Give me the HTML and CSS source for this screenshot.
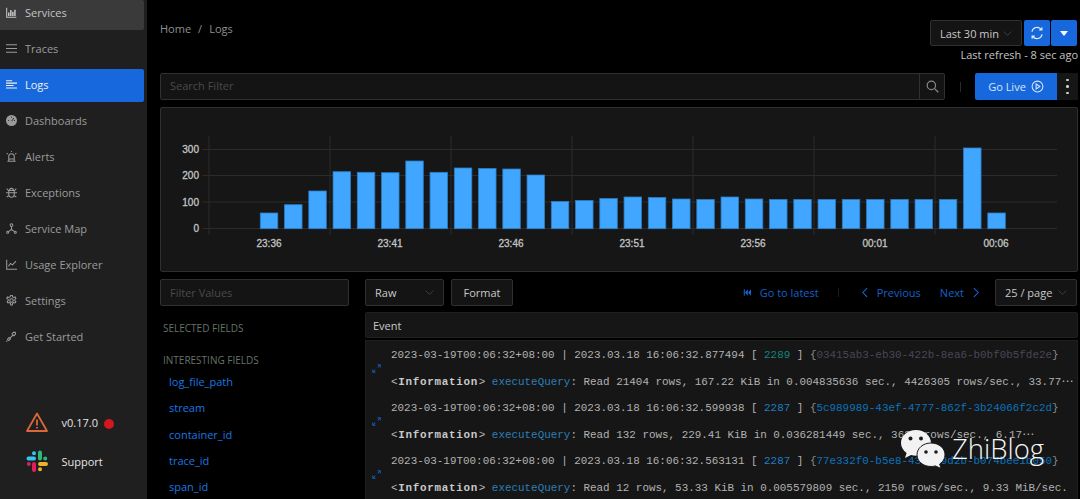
FILE: index.html
```html
<!DOCTYPE html>
<html lang="en">
<head>
<meta charset="utf-8">
<title>Logs</title>
<link rel="stylesheet" href="styles.css">
</head>
<body>
<div class="app">
  <aside class="sidebar">
    <nav class="menu">
      <a class="item first"><svg class="ic" viewBox="0 0 16 16"><path d="M1 1v14h14"/><path class="fat" d="M4 13V8M7 13V4.500M10 13V7M13 13V4"/></svg>Services</a>
      <a class="item"><svg class="ic" viewBox="0 0 16 16"><path d="M0 2.500h16M0 8h16M0 13.500h16"/></svg>Traces</a>
      <a class="item active"><svg class="ic" viewBox="0 0 16 16"><path d="M0 2.500h9M0 6h16M0 9.500h11M0 13h16"/></svg>Logs</a>
      <a class="item"><svg class="ic" viewBox="0 0 16 16"><circle class="solid" cx="8" cy="8" r="8"/><path class="cut" d="M8 9l3.500-4.500M3 8h1.500M8 2.500v1.500M11.500 8H13"/></svg>Dashboards</a>
      <a class="item"><svg class="ic" viewBox="0 0 16 16"><path d="M2 15h12M4 15V8a4 4 0 0 1 8 0v7M1 3l1.500 1.500M15 3l-1.500 1.500M8 0v1.500M4 11.500h8"/></svg>Alerts</a>
      <a class="item"><svg class="ic" viewBox="0 0 16 16"><path d="M5 5a3 3 0 0 1 6 0M4 5h8v6a4 4 0 0 1-8 0zM1 2.500L4 5.500M15 2.500l-3 3M0 8.500h4M12 8.500h4M1 14.500l3-2M15 14.500l-3-2M4 8.500h8"/></svg>Exceptions</a>
      <a class="item"><svg class="ic" viewBox="0 0 16 16"><circle cx="8" cy="3" r="2"/><circle cx="2.500" cy="13.500" r="1.500"/><circle cx="13.500" cy="13.500" r="1.500"/><path d="M8 5v4.500M8 9.500l-4.500 3M8 9.500l4.500 3"/></svg>Service Map</a>
      <a class="item"><svg class="ic" viewBox="0 0 16 16"><path d="M1 1v14h15M3.500 10.500l3-4 3 2 5-5.500"/></svg>Usage Explorer</a>
      <a class="item"><svg class="ic" viewBox="0 0 16 16"><circle cx="8" cy="8" r="2.500"/><path d="M6.800 .6h2.400l.4 2.200 1.600.8 2-.8 1.200 2-1.600 1.600v1.800l1.600 1.400-1.200 2-2-.7-1.600.9-.4 2.600H6.800l-.4-2.600-1.600-.9-2 .7-1.200-2 1.600-1.400V6.400L1 4.800l1.200-2 2 .8 1.600-.8z"/></svg>Settings</a>
      <a class="item"><svg class="ic" viewBox="0 0 16 16"><path d="M6 10l4-4M2 12l2.500-2.500 2 2L4 14zM9 3.500L11 2h2.500L14 4.500 12.500 6l-1 1-2.500-2.500zM.5 15.500l1.500-1.500"/></svg>Get Started</a>
    </nav>
    <div class="side-foot">
      <div class="foot-row">
        <svg class="foot-ic" viewBox="0 0 22 20"><path class="warn" d="M11 1.500L1 19h20zM11 7.500v6M11 15v1.500"/></svg>
        <span class="foot-text">v0.17.0</span><span class="red-dot"></span>
      </div>
      <div class="foot-row">
        <svg class="foot-ic slack" viewBox="0 0 22 22">
          <path class="sl-blue" d="M2.500 8.500h5.500M8 3.200v0"/>
          <path class="sl-green" d="M14 2.500v6M19.200 8.500v0"/>
          <path class="sl-yellow" d="M14 14h6M14 19.200v0"/>
          <path class="sl-red" d="M8 14v6M2.800 14v0"/>
        </svg>
        <span class="foot-text">Support</span>
      </div>
    </div>
  </aside>

  <main class="main">
    <header class="top">
      <div class="crumbs">Home<span class="slash">/</span>Logs</div>
      <div class="time">
        <div class="time-controls">
          <div class="select time-select">Last 30 min<svg class="chev" viewBox="0 0 12 12"><path d="M1 3.500l5 5 5-5"/></svg></div>
          <button class="blue-btn"><svg class="refresh" viewBox="0 0 16 16"><path d="M2.200 6.500A6 6 0 0 1 13 4.200M13.800 9.500A6 6 0 0 1 3 11.800M13.600 1.500v3h-3M2.400 14.500v-3h3"/></svg></button>
          <button class="blue-btn"><span class="caret"></span></button>
        </div>
        <div class="refresh-text">Last refresh - 8 sec ago</div>
      </div>
    </header>

    <div class="search-row">
      <div class="search">
        <span class="search-ph">Search Filter</span>
        <span class="search-btn"><svg class="search-ic" viewBox="0 0 14 14"><circle cx="5.800" cy="5.800" r="4.500"/><path d="M9 9l4.200 4.200"/></svg></span>
      </div>
      <span class="vsep"></span>
      <div class="live">
        <button class="live-btn">Go Live<svg class="play" viewBox="0 0 14 14"><circle cx="7" cy="7" r="5.800"/><path d="M5.500 4.300l4 2.700-4 2.700z"/></svg></button>
        <span class="dots"><i></i><i></i><i></i></span>
      </div>
    </div>

    <section class="chart-panel">
      <svg class="chart" viewBox="0 0 918 165">
        <g class="grid">
          <path d="M42 42.500H897M42 68.500H897M42 95H897M42 121.500H897"/>
          <path d="M49 29v99M170 29v99M291 29v99M412 29v99M533 29v99M654 29v99M775 29v99"/>
        </g>
        <g class="bars">
          <rect x="100.300" y="106" width="17.500" height="15.700"/>
          <rect x="124.550" y="97.700" width="17.500" height="24"/>
          <rect x="148.800" y="84" width="17.500" height="37.700"/>
          <rect x="173.050" y="64.700" width="17.500" height="57"/>
          <rect x="197.300" y="65.300" width="17.500" height="56.400"/>
          <rect x="221.550" y="65.700" width="17.500" height="56"/>
          <rect x="245.800" y="54" width="17.500" height="67.700"/>
          <rect x="270.050" y="65.300" width="17.500" height="56.400"/>
          <rect x="294.300" y="61" width="17.500" height="60.700"/>
          <rect x="318.550" y="61.500" width="17.500" height="60.200"/>
          <rect x="342.800" y="62" width="17.500" height="59.700"/>
          <rect x="367.050" y="68" width="17.500" height="53.700"/>
          <rect x="391.300" y="94.500" width="17.500" height="27.200"/>
          <rect x="415.550" y="93.500" width="17.500" height="28.200"/>
          <rect x="439.800" y="91.500" width="17.500" height="30.200"/>
          <rect x="464.050" y="90" width="17.500" height="31.700"/>
          <rect x="488.300" y="90.500" width="17.500" height="31.200"/>
          <rect x="512.550" y="92" width="17.500" height="29.700"/>
          <rect x="536.800" y="92.500" width="17.500" height="29.200"/>
          <rect x="561.050" y="90" width="17.500" height="31.700"/>
          <rect x="585.300" y="92" width="17.500" height="29.700"/>
          <rect x="609.550" y="92.500" width="17.500" height="29.200"/>
          <rect x="633.800" y="92.500" width="17.500" height="29.200"/>
          <rect x="658.050" y="92.500" width="17.500" height="29.200"/>
          <rect x="682.300" y="92.500" width="17.500" height="29.200"/>
          <rect x="706.550" y="92.500" width="17.500" height="29.200"/>
          <rect x="730.800" y="92.500" width="17.500" height="29.200"/>
          <rect x="755.050" y="92.500" width="17.500" height="29.200"/>
          <rect x="779.300" y="92.500" width="17.500" height="29.200"/>
          <rect x="803.550" y="41" width="17.500" height="80.700"/>
          <rect x="827.800" y="106" width="17.500" height="15.700"/>
        </g>
        <g class="y-labels">
          <text x="39" y="45.500">300</text>
          <text x="39" y="72">200</text>
          <text x="39" y="98.500">100</text>
          <text x="39" y="125">0</text>
        </g>
        <g class="x-labels">
          <text x="109" y="140">23:36</text>
          <text x="230" y="140">23:41</text>
          <text x="351" y="140">23:46</text>
          <text x="472" y="140">23:51</text>
          <text x="593" y="140">23:56</text>
          <text x="715" y="140">00:01</text>
          <text x="836" y="140">00:06</text>
        </g>
      </svg>
    </section>

    <div class="lower">
      <div class="fields">
        <div class="filter">Filter Values</div>
        <div class="field-head selected">SELECTED FIELDS</div>
        <div class="field-head interesting">INTERESTING FIELDS</div>
        <ul class="field-list">
          <li>log_file_path</li>
          <li>stream</li>
          <li>container_id</li>
          <li>trace_id</li>
          <li>span_id</li>
        </ul>
      </div>
      <div class="events">
        <div class="toolbar">
          <div class="select raw">Raw<svg class="chev" viewBox="0 0 12 12"><path d="M1 3.500l5 5 5-5"/></svg></div>
          <button class="format">Format</button>
          <div class="pager">
            <a class="link latest"><svg class="skip" viewBox="0 0 10 8"><path d="M1 0h1.200v8H1zM6 0v8L2.500 4zM10 0v8L6.500 4z"/></svg>Go to latest</a>
            <span class="pager-sep"></span>
            <a class="link prev"><svg class="arrow" viewBox="0 0 8 12"><path d="M7 1L2 6l5 5"/></svg>Previous</a>
            <a class="link next">Next<svg class="arrow" viewBox="0 0 8 12"><path d="M1 1l5 5-5 5"/></svg></a>
          </div>
          <div class="select page-size">25 / page<svg class="chev" viewBox="0 0 12 12"><path d="M1 3.500l5 5 5-5"/></svg></div>
        </div>
        <div class="event-head">Event</div>
        <div class="log-list">
          <div class="log-row">
            <svg class="expand" viewBox="0 0 9 9"><path d="M.8 8.200l2.500-2.500M5.700 3.300L8.200 .8M5.500 .8h2.700v2.700M.8 5.500v2.700h2.700"/></svg>
            <div class="log-lines">
              <div class="line">2023-03-19T00:06:32+08:00 | 2023.03.18 16:06:32.877494 [ <span class="pid teal">2289</span> ] <span class="brace">{</span><span class="uuid dim">03415ab3-eb30-422b-8ea6-b0bf0b5fde2e</span><span class="brace">}</span></div>
              <div class="line"><span class="level">&lt;<b>Information</b>&gt;</span> <span class="fn">executeQuery</span>: Read 21404 rows, 167.22 KiB in 0.004835636 sec., 4426305 rows/sec., 33.77<span class="more">⋯</span></div>
            </div>
          </div>
          <div class="log-row">
            <svg class="expand" viewBox="0 0 9 9"><path d="M.8 8.200l2.500-2.500M5.700 3.300L8.200 .8M5.500 .8h2.700v2.700M.8 5.500v2.700h2.700"/></svg>
            <div class="log-lines">
              <div class="line">2023-03-19T00:06:32+08:00 | 2023.03.18 16:06:32.599938 [ <span class="pid">2287</span> ] <span class="brace">{</span><span class="uuid">5c989989-43ef-4777-862f-3b24066f2c2d</span><span class="brace">}</span></div>
              <div class="line"><span class="level">&lt;<b>Information</b>&gt;</span> <span class="fn">executeQuery</span>: Read 132 rows, 229.41 KiB in 0.036281449 sec., 3638 rows/sec., 6.17<span class="more">⋯</span></div>
            </div>
          </div>
          <div class="log-row">
            <svg class="expand" viewBox="0 0 9 9"><path d="M.8 8.200l2.500-2.500M5.700 3.300L8.200 .8M5.500 .8h2.700v2.700M.8 5.500v2.700h2.700"/></svg>
            <div class="log-lines">
              <div class="line">2023-03-19T00:06:32+08:00 | 2023.03.18 16:06:32.563131 [ <span class="pid">2287</span> ] <span class="brace">{</span><span class="uuid">77e332f0-b5e8-43cb-9d2b-b074bee1b050</span><span class="brace">}</span></div>
              <div class="line"><span class="level">&lt;<b>Information</b>&gt;</span> <span class="fn">executeQuery</span>: Read 12 rows, 53.33 KiB in 0.005579809 sec., 2150 rows/sec., 9.33 MiB/sec.</div>
            </div>
          </div>
        </div>
      </div>
    </div>
  </main>
</div>

<div class="watermark">
  <svg class="wechat" viewBox="0 0 46 40">
    <path class="bubble" d="M16 1C7.500 1 1 6.800 1 14c0 4 2.200 7.600 5.600 10L5 29l6-3c1.700.5 3.300.8 5 .8C24.500 26.800 31 21 31 14S24.500 1 16 1z"/>
    <path class="bubble edge" d="M31 14c-8 0-14 5.300-14 11.800S23 37.500 31 37.500c1.500 0 3-.2 4.300-.6L41 39.500l-1.300-4.500c3.500-2.200 5.300-5.500 5.300-9.200C45 19.300 39 14 31 14z"/>
    <circle class="eye" cx="10.500" cy="9.500" r="2"/><circle class="eye" cx="21" cy="9.500" r="2"/>
    <circle class="eye" cx="26" cy="23" r="1.800"/><circle class="eye" cx="36" cy="23" r="1.800"/>
  </svg>
  <span class="wm-text">ZhiBlog</span>
</div>
</body>
</html>
```

FILE: styles.css
```css
* { box-sizing: border-box; }
html, body { margin: 0; height: 100%; background: #000; overflow: hidden; }
body { position: relative; font-family: "Open Sans", "Noto Sans", sans-serif; font-size: 11px; color: #c8c8c8; }
button { font: inherit; border: 0; padding: 0; }
svg { display: block; }

.app { display: flex; height: 499px; }

/* Sidebar */
.sidebar { width: 147px; flex: none; background: #1f1f1f; display: flex; flex-direction: column; justify-content: space-between; padding-bottom: 27px; }
.menu { display: flex; flex-direction: column; gap: 3px; }
.item { width: 144px; height: 33px; display: flex; align-items: center; gap: 8px; padding-left: 6px; padding-bottom: 2px; color: #9b9b9b; border-radius: 0 2px 2px 0; }
.item.first { height: 30px; background: #3a3a3a; color: #c4c4c4; padding-bottom: 5px; }
.item.active { background: #1668dc; color: #f0f0f0; }
.ic { width: 11px; height: 11px; flex: none; fill: none; stroke: currentColor; stroke-width: 1.500; overflow: visible; }
.ic .fat { stroke-width: 2.200; }
.ic .solid { fill: currentColor; stroke: none; }
.ic .cut { stroke: #1f1f1f; stroke-width: 1.300; }
.side-foot { display: flex; flex-direction: column; gap: 17px; padding-left: 26px; }
.foot-row { display: flex; align-items: center; height: 22px; }
.foot-ic { width: 22px; height: 22px; flex: none; margin-right: 13.500px; fill: none; }
.foot-text { color: #e4e4e4; }
.warn { stroke: #d9673a; stroke-width: 1.800; stroke-linejoin: round; }
.red-dot { width: 10px; height: 10px; border-radius: 50%; background: #d4171f; margin-left: 6px; margin-top: 3px; }
.slack path { stroke-width: 4; stroke-linecap: round; fill: none; }
.sl-blue { stroke: #36c5f0; }
.sl-green { stroke: #2eb67d; }
.sl-yellow { stroke: #ecb22e; }
.sl-red { stroke: #e01e5a; }

/* Main */
.main { flex: 1; min-width: 0; padding: 0 2px 0 13px; display: flex; flex-direction: column; }
.top { display: flex; justify-content: space-between; height: 73px; padding-top: 20px; }
.crumbs { color: #8f8f8f; padding-top: 1px; line-height: 16px; }
.slash { margin: 0 7px; }
.time { display: flex; flex-direction: column; align-items: flex-end; gap: 1px; }
.time-controls { display: flex; gap: 1.500px; margin-right: 1px; }
.select { display: flex; align-items: center; justify-content: space-between; height: 27px; background: #141414; border: 1px solid #303030; border-radius: 2px; color: #c9c9c9; padding: 0 9px; }
.time-select { width: 92px; height: 26px; }
.chev { width: 9px; height: 9px; fill: none; stroke: #4f4f4f; stroke-width: 1; }
.blue-btn { width: 26px; height: 26px; background: #1668dc; border-radius: 2px; display: flex; align-items: center; justify-content: center; }
.refresh { width: 14px; height: 14px; fill: none; stroke: #e8eef8; stroke-width: 1.300; }
.caret { width: 0; height: 0; border: 4px solid transparent; border-top: 5px solid #fff; border-bottom: 0; }
.refresh-text { color: #c4c4c4; line-height: 16px; }

.search-row { display: flex; align-items: center; height: 27px; }
.search { flex: 1; height: 27px; display: flex; justify-content: space-between; align-items: center; background: #141414; border: 1px solid #303030; border-radius: 2px; }
.search-ph { padding-left: 9px; padding-bottom: 2px; color: #4a4a4a; }
.search-btn { width: 25px; height: 100%; border-left: 1px solid #303030; display: flex; align-items: center; justify-content: center; }
.search-ic { width: 13px; height: 13px; fill: none; stroke: #8a8a8a; stroke-width: 1.300; }
.vsep { width: 1px; height: 10px; background: #2b2b2b; margin: 0 14px 0 15px; }
.live { display: flex; width: 103px; height: 27px; }
.live-btn { width: 82px; background: #1668dc; border-radius: 2px 0 0 2px; color: #dbe6f7; display: flex; align-items: center; justify-content: center; gap: 5px; }
.play { width: 13px; height: 13px; fill: none; stroke: #dbe6f7; stroke-width: 1.100; }
.dots { flex: 1; background: #161616; display: flex; flex-direction: column; align-items: center; justify-content: center; gap: 4px; }
.dots i { width: 2.500px; height: 2.500px; border-radius: 50%; background: #cfcfcf; }

.chart-panel { margin-top: 7px; height: 165px; background: #161616; border: 1px solid #2f2f2f; border-radius: 2px; flex: none; position: relative; }
.chart { position: absolute; left: -1px; top: -1px; width: 918px; height: 165px; }
.grid path { stroke: #2b2b2b; stroke-width: 1; fill: none; }
.bars rect { fill: #40a6ff; stroke: #2a7dc4; stroke-width: .8; }
.y-labels text, .x-labels text { font-family: "Liberation Sans", sans-serif; font-size: 10px; fill: #c4c4c4; stroke: #c4c4c4; stroke-width: .3; }
.y-labels text { text-anchor: end; }
.x-labels text { text-anchor: middle; }

/* Lower */
.lower { margin-top: 7px; display: flex; gap: 16px; min-height: 0; flex: 1; }
.fields { width: 189px; flex: none; }
.filter { height: 27px; line-height: 25px; padding-left: 9px; background: #141414; border: 1px solid #303030; border-radius: 2px; color: #4a4a4a; }
.field-head { padding-left: 3px; color: #667266; font-size: 10px; line-height: 14px; }
.selected { margin-top: 15px; }
.interesting { margin-top: 18px; }
.field-list { list-style: none; margin: 7px 0 0; padding: 0 0 0 9px; color: #1a78e0; }
.field-list li { height: 26.300px; line-height: 16px; }

.events { flex: 1; min-width: 0; display: flex; flex-direction: column; }
.toolbar { display: flex; align-items: center; height: 27px; flex: none; }
.raw { width: 79px; }
.format { margin-left: 7px; width: 62px; height: 27px; background: #141414; border: 1px solid #303030; border-radius: 2px; color: #c9c9c9; }
.pager { margin-left: auto; display: flex; align-items: center; color: #1560c8; }
.link { display: flex; align-items: center; }
.skip { width: 8px; height: 7px; fill: #1668dc; margin-right: 9px; }
.latest { margin-right: 19px; }
.pager-sep { width: 1px; height: 9px; background: #1c1c1c; margin-right: 22px; }
.arrow { width: 7px; height: 11px; fill: none; stroke: #1668dc; stroke-width: 1.200; }
.prev .arrow { margin-right: 9px; }
.next { margin-left: 19px; }
.next .arrow { margin-left: 9px; }
.page-size { width: 82px; margin-left: 15px; margin-right: 1px; }
.event-head { margin-top: 6px; height: 26px; line-height: 26px; padding-left: 7px; background: #161616; border: 1px solid #1f1f1f; border-radius: 2px; color: #c9c9c9; flex: none; }
.log-list { margin-top: 2px; flex: 1; background: #161616; border: 1px solid #1f1f1f; border-bottom: 0; padding-top: 1px; overflow: hidden; }
.log-row { display: flex; align-items: center; height: 53px; }
.expand { width: 9px; height: 9px; margin-left: 6px; margin-right: 10px; flex: none; fill: none; stroke: #1660c0; stroke-width: 1; }
.log-lines { flex: 1; min-width: 0; }
.line { font-family: "Liberation Mono", "DejaVu Sans Mono", monospace; font-size: 10.920px; line-height: 26.500px; white-space: nowrap; color: #b2b2b2; }
.pid { color: #1b7fc4; }
.pid.teal { color: #13857f; }
.brace { color: #8a8a8a; }
.uuid { color: #0a73bd; }
.uuid.dim { color: #4a4658; }
.level { color: #b9b9b9; }
.level b { color: #c9c9c9; letter-spacing: .7px; margin: 0 .75px; }
.fn { color: #2c7fb8; }
.more { font-family: "DejaVu Sans", sans-serif; font-size: 12px; }

/* Watermark */
.watermark { position: absolute; left: 900px; top: 428px; display: flex; align-items: center; gap: 6px; }
.wechat { width: 46px; height: 40px; }
.bubble { fill: #f2f2f2; }
.edge { stroke: #1a1a1a; stroke-width: 1; }
.eye { fill: #1c1c1c; }
.wm-text { font-family: "Open Sans", sans-serif; font-size: 27.500px; font-weight: 300; line-height: 40px; padding-top: 1px; color: #f5f5f5; }
```
